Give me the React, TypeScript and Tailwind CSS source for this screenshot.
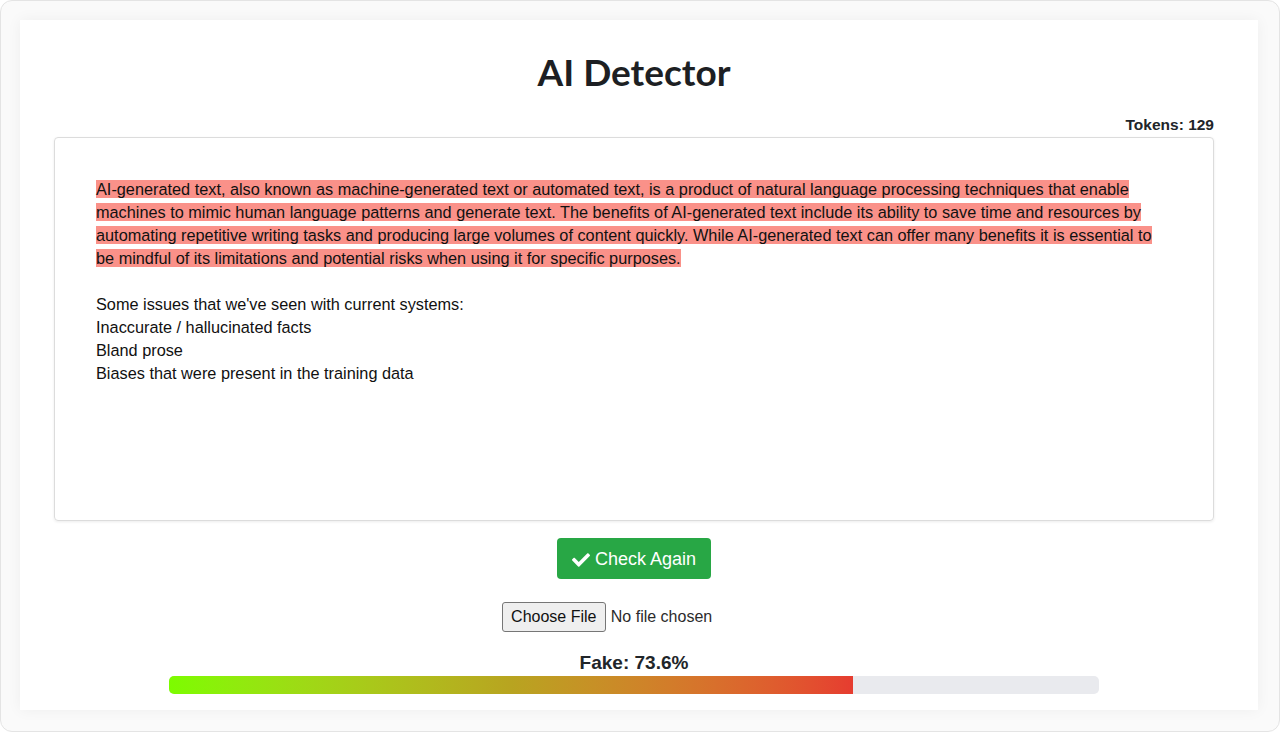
import React from 'react';
import { FaCheck } from 'react-icons/fa';

const highlighted = [
  'AI-generated text, also known as machine-generated text or automated text, is a product of natural language processing techniques that enable ',
  'machines to mimic human language patterns and generate text. The benefits of AI-generated text include its ability to save time and resources by ',
  'automating repetitive writing tasks and producing large volumes of content quickly. While AI-generated text can offer many benefits it is essential to ',
  'be mindful of its limitations and potential risks when using it for specific purposes.',
];

const plain = [
  "Some issues that we've seen with current systems:",
  'Inaccurate / hallucinated facts',
  'Bland prose',
  'Biases that were present in the training data',
];

export default function App() {
  const fake = 73.6;

  return (
    <div className="w-[1280px] h-[732px] p-[19px] bg-[#fafafa] border border-[#e4e4e4] rounded-[12px] font-['Liberation_Sans',Arial,sans-serif] text-[#212529]">
      <div className="w-[1238px] h-[690px] bg-white shadow-[0_0_14px_rgba(0,0,0,0.05)] pl-[34px] pr-[44px] pt-[28px] flex flex-col">
        <h1 className="h-[48px] leading-[48px] text-center text-[37px] font-bold font-['Lato',sans-serif] text-[#1d1f23]">
          AI Detector
        </h1>

        <div className="mt-[20px] h-[18px] leading-[18px] text-right text-[15.5px] font-bold">Tokens: 129</div>

        <div className="mt-[3px] h-[384px] border border-[#dcdcdc] rounded-[4px] shadow-[0_1px_3px_rgba(0,0,0,0.08)] pl-[41px] pr-[20px] pt-[40px] text-[16.3px] leading-[23px] text-[#111]">
          <p className="whitespace-nowrap">
            {highlighted.map((line, i) => (
              <React.Fragment key={i}>
                <span className="bg-[#fa9189]">{line}</span>
                {i < highlighted.length - 1 && <br />}
              </React.Fragment>
            ))}
          </p>
          <div className="h-[23px]" />
          {plain.map((line, i) => (
            <div key={i}>{line}</div>
          ))}
        </div>

        <div className="mt-[17px] flex justify-center">
          <button className="h-[41px] w-[154px] rounded-[4px] bg-[#28a745] text-white text-[18px] flex items-center justify-center gap-[5px] pt-[2px]">
            <FaCheck className="w-[18px] h-[18px]" />
            <span>Check Again</span>
          </button>
        </div>

        <div className="mt-[23px] mr-[54px] flex justify-center items-center gap-[5px] text-[16px]">
          <span className="h-[30px] w-[104px] rounded-[3px] border border-[#767676] bg-[#efefef] flex items-center justify-center text-[#111]">
            Choose File
          </span>
          <span className="text-[#2b2b2b]">No file chosen</span>
        </div>

        <div className="mt-[20px] h-[22px] leading-[22px] text-center text-[19px] font-bold">Fake: {fake}%</div>

        <div className="mt-[2px] mx-auto w-[930px] h-[18px] rounded-[5px] bg-[#e9eaee] overflow-hidden">
          <div
            className="h-full bg-gradient-to-r from-[#7cfc00] via-[#b8a420] to-[#e63c30]"
            style={{ width: `${fake}%` }}
          />
        </div>
      </div>
    </div>
  );
}
